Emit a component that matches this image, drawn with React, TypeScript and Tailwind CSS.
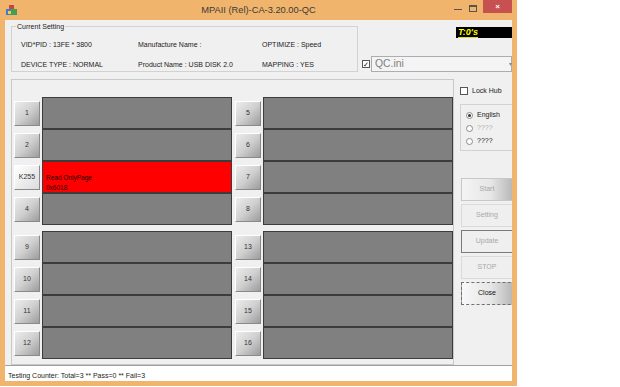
import React from "react"

const font = { fontFamily: '"Liberation Sans", Arial, sans-serif' }

const leftSlots = ["1", "2", "K255", "4", "9", "10", "11", "12"]
const rightSlots = ["5", "6", "7", "8", "13", "14", "15", "16"]

function SlotButton({ label, light }: { label: string; light?: boolean }) {
  return (
    <div
      className={`w-[26px] h-[25px] flex items-center justify-center text-[7px] text-[#333] border border-t-white border-l-white border-r-[#8a8a8a] border-b-[#8a8a8a] ${
        light
          ? "bg-gradient-to-br from-white to-[#dcdcdc]"
          : "bg-gradient-to-br from-[#ececec] via-[#d0d0d0] to-[#9c9c9c]"
      }`}
    >
      {label}
    </div>
  )
}

function Slot({ label, red }: { label: string; red?: boolean }) {
  return (
    <div className="flex items-center h-[32px]">
      <SlotButton label={label} light={label === "K255"} />
      <div
        className={`ml-[2px] w-[190px] h-[32px] border border-[#3c3c3c] ${
          red ? "bg-[#ff0000] pl-[3px] pt-[11px]" : "bg-[#808080]"
        }`}
      >
        {red && (
          <div className="text-[6.5px] leading-[10px] text-[#200000]">
            <div>Read OnlyPage</div>
            <div>0x6018</div>
          </div>
        )}
      </div>
    </div>
  )
}

function Column({ labels }: { labels: string[] }) {
  return (
    <div className="flex flex-col">
      {labels.slice(0, 4).map((l) => (
        <Slot key={l} label={l} red={l === "K255"} />
      ))}
      <div className="h-[6px]" />
      {labels.slice(4).map((l) => (
        <Slot key={l} label={l} />
      ))}
    </div>
  )
}

function SideButton({ label, kind }: { label: string; kind: string }) {
  const styles: Record<string, string> = {
    grad: "bg-gradient-to-r from-[#f4f4f4] via-[#e6e6e6] to-[#a8a8a8] border border-[#c8c8c8] text-[#a8a8a8]",
    flat: "bg-[#efefef] border border-[#dadada] text-[#a8a8a8]",
    dark: "bg-[#efefef] border border-[#7a7a7a] text-[#a8a8a8]",
    close: "bg-gradient-to-r from-[#f8f8f8] via-[#e6e6e6] to-[#a8a8a8] border border-dashed border-[#707070] text-[#111]",
  }
  return (
    <div className={`w-[60px] h-[23px] flex items-center justify-center text-[7px] ${styles[kind]}`}>
      <span className="mr-[8px]">{label}</span>
    </div>
  )
}

function Radio({ label, checked, grey }: { label: string; checked?: boolean; grey?: boolean }) {
  return (
    <div className="flex items-center h-[13px]">
      <div className="w-[7px] h-[7px] rounded-full border border-[#8a8a8a] bg-white flex items-center justify-center">
        {checked && <div className="w-[3px] h-[3px] rounded-full bg-[#333]" />}
      </div>
      <span className={`ml-[4px] text-[7px] ${grey ? "text-[#b0b0b0]" : "text-[#222]"}`}>{label}</span>
    </div>
  )
}

export default function App() {
  return (
    <div className="w-[620px] h-[387px] bg-white overflow-hidden" style={font}>
      <div className="w-[517px] h-[386px] bg-[#f0b46c] flex flex-col">
        {/* title bar */}
        <div className="h-[20px] flex items-start relative">
          <svg className="ml-[6px] mt-[5px]" width="11" height="11" viewBox="0 0 11 11">
            <rect x="3" y="0" width="5" height="4" fill="#d04040" />
            <rect x="0" y="4" width="5" height="6" fill="#3a7fd0" />
            <rect x="5" y="4" width="6" height="6" fill="#40a050" />
            <rect x="2" y="6" width="3" height="3" fill="#f0d040" />
          </svg>
          <div className="absolute left-0 right-0 top-[4px] text-center text-[9.3px] leading-[12px] text-[#3a3a3a]">
            MPAII (Rel)-CA-3.20.00-QC
          </div>
          <div className="ml-auto mr-[5px] flex items-start">
            <div className="w-[8px] h-[1px] bg-[#555] mt-[9px]" />
            <div className="ml-[7px] mt-[5px] w-[8px] h-[7px] border border-[#555] border-t-2" />
            <div className="ml-[6px] w-[29px] h-[13px] bg-[#c75050] flex items-center justify-center text-white text-[8px] font-bold">
              ×
            </div>
          </div>
        </div>

        {/* client area */}
        <div className="mx-[5px] h-[361px] bg-[#f0f0f0] flex flex-col overflow-hidden">
          {/* top section */}
          <div className="h-[59px] flex">
            <div className="ml-[6px] mt-[6px] w-[347px] h-[46px] border border-[#d2d2d2] relative text-[7px] text-[#222]">
              <span className="absolute -top-[5px] left-[4px] bg-[#f0f0f0] px-[1px]">Current Setting</span>
              <div className="flex pl-[9px] pt-[13px]">
                <span className="w-[117px]">VID*PID : 13FE * 3800</span>
                <span className="w-[124px]">Manufacture Name :</span>
                <span>OPTIMIZE : Speed</span>
              </div>
              <div className="flex pl-[9px] pt-[9px]">
                <span className="w-[117px]">DEVICE TYPE : NORMAL</span>
                <span className="w-[124px]">Product Name : USB DISK 2.0</span>
                <span>MAPPING : YES</span>
              </div>
            </div>
            <div className="ml-[4px] flex-1 flex flex-col">
              <div className="self-end mt-[7px] w-[56px] h-[11px] bg-black flex flex-col items-start justify-center pl-[2px]">
                <span className="text-[9px] leading-[9px] font-bold italic text-[#ffff00] whitespace-nowrap border-b border-[#e0e000]">
                  T:0's
                </span>
              </div>
              <div className="mt-[18px] flex items-center">
                <div className="w-[8px] h-[8px] border border-[#555] bg-white flex items-center justify-center text-[7px] leading-none text-black">
                  ✓
                </div>
                <div className="ml-[1px] flex-1 h-[16px] border border-[#abadb3] bg-[#f4f4f4] flex items-center">
                  <span className="ml-[3px] text-[10.4px] text-[#808080]">QC.ini</span>
                  <span className="ml-auto mr-[-1px] text-[6px] text-[#888]">▾</span>
                </div>
              </div>
            </div>
          </div>

          {/* main section */}
          <div className="h-[286px] flex">
            <div className="ml-[6px] w-[443px] h-[286px] border border-[#c8c8c8] pl-[2px] pt-[17px] flex">
              <Column labels={leftSlots} />
              <div className="w-[3px]" />
              <Column labels={rightSlots} />
            </div>
            <div className="flex-1 flex flex-col pl-[6px]">
              <div className="mt-[7px] flex items-center">
                <div className="w-[8px] h-[8px] border border-[#555] bg-white" />
                <span className="ml-[4px] text-[7px] text-[#222]">Lock Hub</span>
              </div>
              <div className="mt-[7px] w-[60px] h-[47px] border border-[#d2d2d2] pl-[5px] pt-[4px]">
                <Radio label="English" checked />
                <Radio label="????" grey />
                <Radio label="????" />
              </div>
              <div className="mt-[27px] pl-[1px] flex flex-col gap-[3px]">
                <SideButton label="Start" kind="grad" />
                <SideButton label="Setting" kind="flat" />
                <SideButton label="Update" kind="dark" />
                <SideButton label="STOP" kind="flat" />
                <SideButton label="Close" kind="close" />
              </div>
            </div>
          </div>

          {/* status bar */}
          <div className="h-[16px] bg-white border-t border-[#a0a0a0] pl-[3px] pt-[6px] text-[7px] leading-[8px] text-[#222] whitespace-nowrap">
            Testing Counter: Total=3 ** Pass=0 ** Fail=3
          </div>
        </div>
      </div>
    </div>
  )
}
